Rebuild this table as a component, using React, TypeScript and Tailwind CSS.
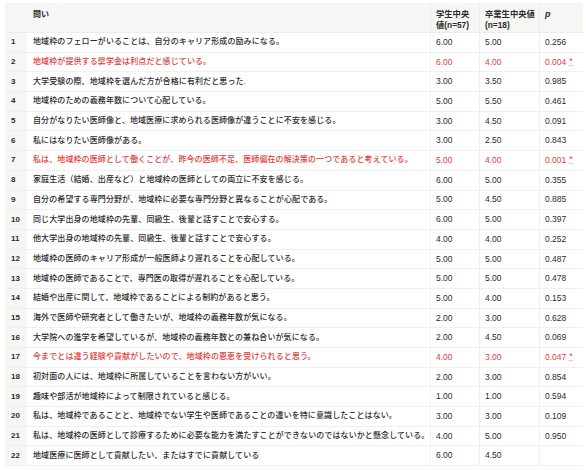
import React from "react";

type Row = { q: string; s: string; g: string; p: string; sig?: boolean };

const rows: Row[] = [
  { q: "地域枠のフェローがいることは、自分のキャリア形成の励みになる。", s: "6.00", g: "5.00", p: "0.256" },
  { q: "地域枠が提供する奨学金は利点だと感じている。", s: "6.00", g: "4.00", p: "0.004", sig: true },
  { q: "大学受験の際、地域枠を選んだ方が合格に有利だと思った.", s: "3.00", g: "3.50", p: "0.985" },
  { q: "地域枠のための義務年数について心配している。", s: "5.00", g: "5.50", p: "0.461" },
  { q: "自分がなりたい医師像と、地域医療に求められる医師像が違うことに不安を感じる。", s: "3.00", g: "4.50", p: "0.091" },
  { q: "私にはなりたい医師像がある。", s: "3.00", g: "2.50", p: "0.843" },
  { q: "私は、地域枠の医師として働くことが、昨今の医師不足、医師偏在の解決策の一つであると考えている。", s: "5.00", g: "4.00", p: "0.001", sig: true },
  { q: "家庭生活（結婚、出産など）と地域枠の医師としての両立に不安を感じる。", s: "6.00", g: "5.00", p: "0.355" },
  { q: "自分の希望する専門分野が、地域枠に必要な専門分野と異なることが心配である。", s: "5.00", g: "4.50", p: "0.885" },
  { q: "同じ大学出身の地域枠の先輩、同級生、後輩と話すことで安心する。", s: "6.00", g: "5.00", p: "0.397" },
  { q: "他大学出身の地域枠の先輩、同級生、後輩と話すことで安心する。", s: "4.00", g: "4.00", p: "0.252" },
  { q: "地域枠の医師のキャリア形成が一般医師より遅れることを心配している。", s: "5.00", g: "5.00", p: "0.487" },
  { q: "地域枠の医師であることで、専門医の取得が遅れることを心配している。", s: "5.00", g: "5.00", p: "0.478" },
  { q: "結婚や出産に関して、地域枠であることによる制約があると思う。", s: "5.00", g: "4.00", p: "0.153" },
  { q: "海外で医師や研究者として働きたいが、地域枠の義務年数が気になる。", s: "2.00", g: "3.00", p: "0.628" },
  { q: "大学院への進学を希望しているが、地域枠の義務年数との兼ね合いが気になる。", s: "2.00", g: "4.50", p: "0.069" },
  { q: "今までとは違う経験や貢献がしたいので、地域枠の恩恵を受けられると思う。", s: "4.00", g: "3.00", p: "0.047", sig: true },
  { q: "初対面の人には、地域枠に所属していることを言わない方がいい。", s: "2.00", g: "3.00", p: "0.854" },
  { q: "趣味や部活が地域枠によって制限されていると感じる。", s: "1.00", g: "1.00", p: "0.594" },
  { q: "私は、地域枠であることと、地域枠でない学生や医師であることの違いを特に意識したことはない。", s: "3.00", g: "3.00", p: "0.109" },
  { q: "私は、地域枠の医師として診療するために必要な能力を満たすことができないのではないかと懸念している。", s: "4.00", g: "5.00", p: "0.950" },
  { q: "地域医療に医師として貢献したい、またはすでに貢献している", s: "6.00", g: "4.50", p: "" },
];

const cols = "grid grid-cols-[22px_403px_49px_60px_44px]";

export default function App() {
  return (
    <div className="min-h-[471px] w-[586px] bg-white pl-[5px] pt-[3px] font-['Liberation_Sans','Noto_Sans_CJK_JP',sans-serif] text-[#2b2b2b]">
      <div className="w-[578px]">
        <div className={`${cols} h-[30px] border-b border-[#ececea] bg-[#f6f6f4] text-[8px] font-bold leading-[11px]`}>
          <div />
          <div className="pl-[6px] pt-[6px]">問い</div>
          <div className="border-l border-[#ececea] pl-[5px] pt-[6px] text-[8.3px]">学生中央<br />値(n=57)</div>
          <div className="border-l border-[#ececea] pl-[5px] pt-[6px] text-[8.3px]">卒業生中央値<br />(n=18)</div>
          <div className="border-l border-[#ececea] pl-[5px] pt-[6px] text-[9px] italic">p</div>
        </div>
        {rows.map((r, i) => (
          <div
            key={i}
            className={`${cols} h-[19.7px] items-stretch border-b border-[#f0f0ee] text-[8.5px] ${r.sig ? "text-[#e0403a]" : "text-[#2b2b2b]"}`}
          >
            <div className="flex items-center bg-[#f6f6f4] pl-[6px] text-[8px] font-bold text-[#2b2b2b]">{i + 1}</div>
            <div className="flex items-center whitespace-nowrap pl-[6px] text-[8px] font-medium tracking-[0.1px]">{r.q}</div>
            <div className="flex items-center border-l border-[#f0f0ee] pl-[5px]">{r.s}</div>
            <div className="flex items-center border-l border-[#f0f0ee] pl-[5px]">{r.g}</div>
            <div className="flex items-center border-l border-[#f0f0ee] pl-[5px]">
              {r.p}
              {r.sig && <span className="ml-[3px] border-b border-dotted border-[#bbb] leading-[7px]">*</span>}
            </div>
          </div>
        ))}
      </div>
    </div>
  );
}
